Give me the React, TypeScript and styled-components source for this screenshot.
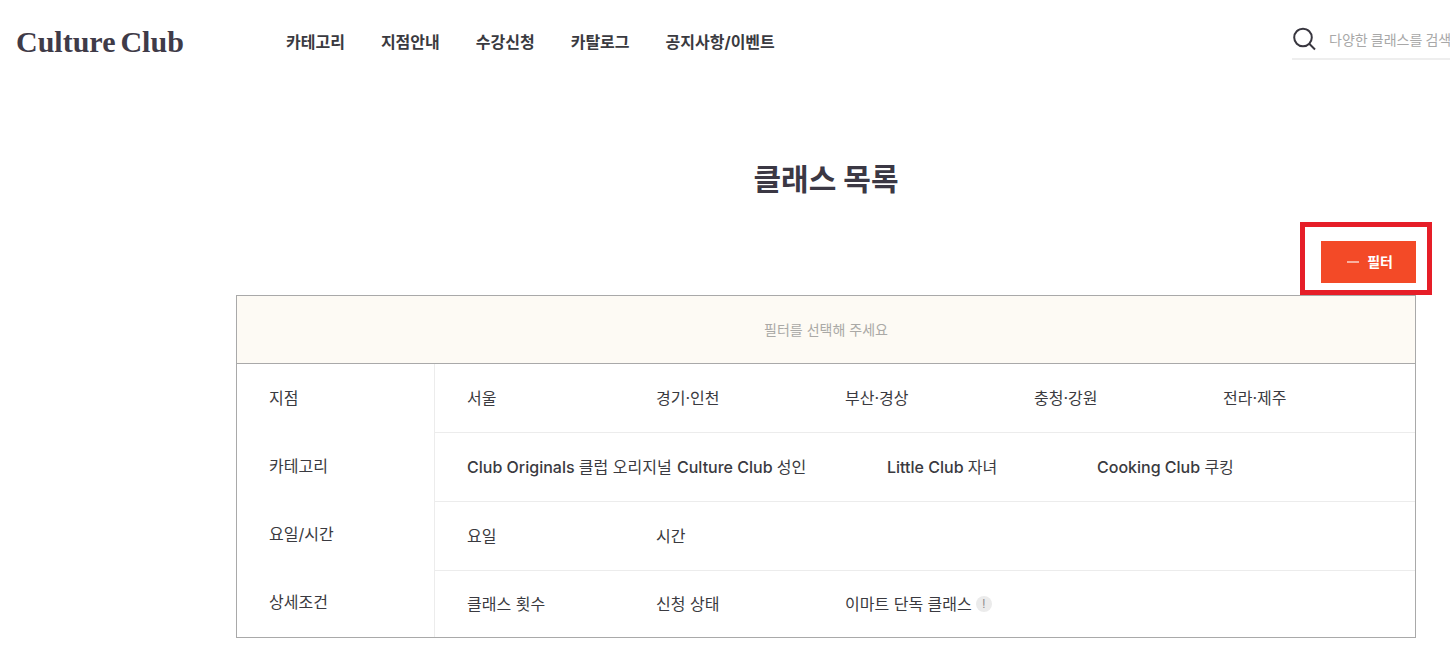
import React from "react";
import styled, { createGlobalStyle } from "styled-components";

const GlobalStyle = createGlobalStyle`
  *, *::before, *::after { box-sizing: border-box; }
  body {
    margin: 0;
    background: #fff;
    color: #3a3a40;
    font-family: Inter, "Noto Sans CJK KR", sans-serif;
    font-size: 16px;
    line-height: 24px;
    overflow-x: hidden;
  }
  button, input { font: inherit; color: inherit; }
`;

const Header = styled.header`
  display: flex;
  align-items: center;
  height: 84px;
  padding-left: 16px;
  overflow: hidden;
`;

const Logo = styled.a`
  display: flex;
  gap: 5px;
  width: 270px;
  flex: none;
  color: #3f3b48;
  font-family: "Liberation Serif", serif;
  font-size: 30px;
  font-weight: 700;
  line-height: 36px;
  text-decoration: none;
`;

const LogoWord = styled.span`
  white-space: nowrap;
`;

const Nav = styled.nav`
  display: flex;
  gap: 36px;
`;

const NavLink = styled.a`
  color: inherit;
  font-weight: 700;
  text-decoration: none;
  white-space: nowrap;
`;

const Search = styled.label`
  display: flex;
  align-items: center;
  gap: 12px;
  flex: none;
  width: 158px;
  height: 40px;
  margin-left: auto;
  margin-bottom: 24px;
  align-self: flex-end;
  border-bottom: 2px solid #eee;
  overflow: hidden;
`;

const SearchIcon = styled.svg`
  flex: none;
  width: 25px;
  height: 25px;
`;

const SearchInput = styled.input`
  flex: none;
  width: 240px;
  padding: 0;
  border: 0;
  outline: 0;
  background: transparent;
  font-family: "Noto Sans CJK KR", sans-serif;
  font-size: 14px;
  &::placeholder { color: #a8a8a8; opacity: 1; }
`;

const Main = styled.main`
  padding: 72px 34px 25px 236px;
`;

const Title = styled.h1`
  margin: 0;
  color: #3b3844;
  font-size: 30px;
  font-weight: 700;
  line-height: 46px;
  text-align: center;
`;

const Toolbar = styled.div`
  display: flex;
  justify-content: flex-end;
  padding: 39px 0 12px;
`;

const FilterWrap = styled.div`
  position: relative;
`;

const Highlight = styled.span`
  position: absolute;
  inset: -19px -16px -12px -21px;
  border: 5px solid #e61e28;
  pointer-events: none;
`;

const FilterButton = styled.button`
  display: flex;
  align-items: center;
  gap: 8px;
  height: 42px;
  padding: 0 23px 0 26px;
  border: 0;
  background: #f34a27;
  color: #fff;
  font-size: 14px;
  font-weight: 700;
`;

const Minus = styled.span`
  width: 12px;
  height: 2px;
  background: #f9b09f;
`;

const Panel = styled.section`
  border: 1px solid #a9a9a9;
`;

const Selected = styled.p`
  display: flex;
  align-items: center;
  justify-content: center;
  height: 68px;
  margin: 0;
  border-bottom: 1px solid #a9a9a9;
  background: #fdfaf4;
  color: #aaa9a6;
  font-size: 14px;
`;

const Columns = styled.div`
  display: grid;
  grid-template-columns: 198px 1fr;
`;

const Labels = styled.div`
  border-right: 1px solid #ececec;
`;

const GroupLabel = styled.div`
  display: flex;
  align-items: center;
  height: 68px;
  padding-left: 32px;
`;

const Groups = styled.div`
  display: flex;
  flex-direction: column;
`;

const Group = styled.div<{ $column: number }>`
  display: grid;
  grid-template-columns: repeat(auto-fill, ${(p) => p.$column}px);
  align-items: center;
  height: 69px;
  padding-left: 32px;
  border-bottom: 1px solid #ececec;
  &:last-child { height: 66px; border-bottom: 0; }
`;

const Option = styled.button`
  display: flex;
  align-items: center;
  gap: 4px;
  padding: 0;
  border: 0;
  background: none;
  font-weight: 400;
  text-align: left;
  white-space: nowrap;
`;

const OptionText = styled.span``;

const Latin = styled.span`
  font-weight: 500;
`;

const Info = styled.span`
  display: flex;
  align-items: center;
  justify-content: center;
  width: 16px;
  height: 16px;
  border-radius: 50%;
  background: #ebebeb;
  color: #8c8c8c;
  font-family: Roboto, sans-serif;
  font-size: 12px;
  line-height: 16px;
`;

type Item = { latin?: string; text: string; info?: boolean };

const NAV = ["카테고리", "지점안내", "수강신청", "카탈로그", "공지사항/이벤트"];

const GROUPS: { id: string; label: string; column: number; items: Item[] }[] = [
  {
    id: "branch",
    label: "지점",
    column: 189,
    items: [
      { text: "서울" },
      { text: "경기·인천" },
      { text: "부산·경상" },
      { text: "충청·강원" },
      { text: "전라·제주" },
    ],
  },
  {
    id: "category",
    label: "카테고리",
    column: 210,
    items: [
      { latin: "Club Originals", text: "클럽 오리지널" },
      { latin: "Culture Club", text: "성인" },
      { latin: "Little Club", text: "자녀" },
      { latin: "Cooking Club", text: "쿠킹" },
    ],
  },
  {
    id: "time",
    label: "요일/시간",
    column: 189,
    items: [{ text: "요일" }, { text: "시간" }],
  },
  {
    id: "detail",
    label: "상세조건",
    column: 189,
    items: [
      { text: "클래스 횟수" },
      { text: "신청 상태" },
      { text: "이마트 단독 클래스", info: true },
    ],
  },
];

export default function App() {
  return (
    <>
      <GlobalStyle />
      <Header>
        <Logo href="#">
          <LogoWord>Culture</LogoWord> <LogoWord>Club</LogoWord>
        </Logo>
        <Nav>
          {NAV.map((name) => (
            <NavLink href="#" key={name}>{name}</NavLink>
          ))}
        </Nav>
        <Search>
          <SearchIcon viewBox="0 0 25 25" fill="none" stroke="#38363f" strokeWidth="2" aria-hidden="true">
            <circle cx="11" cy="10.5" r="8.8" />
            <path d="M17 16.5l6 6" />
          </SearchIcon>
          <SearchInput type="search" aria-label="검색" placeholder="다양한 클래스를 검색해보세요" />
        </Search>
      </Header>
      <Main>
        <Title>클래스 목록</Title>
        <Toolbar>
          <FilterWrap>
            <FilterButton type="button" aria-expanded="true">
              <Minus />
              필터
            </FilterButton>
            <Highlight />
          </FilterWrap>
        </Toolbar>
        <Panel>
          <Selected>필터를 선택해 주세요</Selected>
          <Columns>
            <Labels>
              {GROUPS.map((g) => (
                <GroupLabel id={g.id} key={g.id}>{g.label}</GroupLabel>
              ))}
            </Labels>
            <Groups>
              {GROUPS.map((g) => (
                <Group key={g.id} role="group" aria-labelledby={g.id} $column={g.column}>
                  {g.items.map((item) => (
                    <Option type="button" key={item.text}>
                      <OptionText>
                        {item.latin && <Latin>{item.latin} </Latin>}
                        {item.text}
                      </OptionText>
                      {item.info && <Info>!</Info>}
                    </Option>
                  ))}
                </Group>
              ))}
            </Groups>
          </Columns>
        </Panel>
      </Main>
    </>
  );
}
